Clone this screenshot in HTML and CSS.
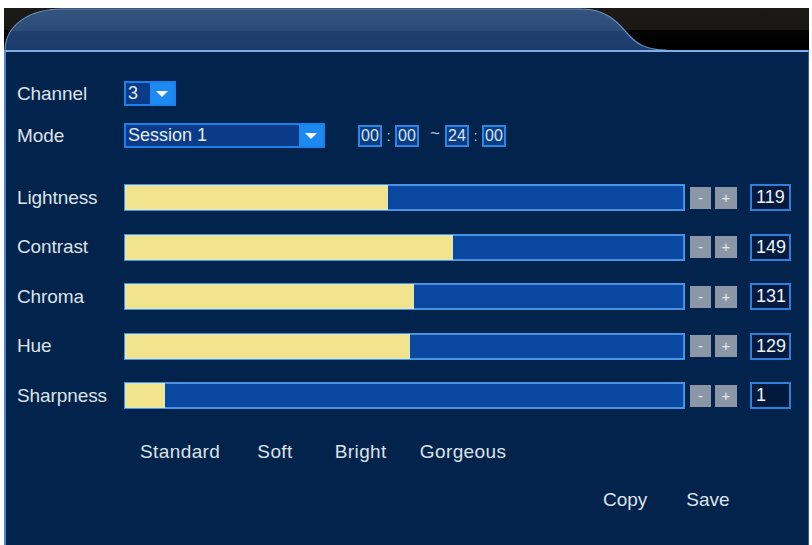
FILE: index.html
```html
<!DOCTYPE html>
<html>
<head>
<meta charset="utf-8">
<link rel="stylesheet" href="styles.css">
</head>
<body>
<div class="frame">
  <div class="header">
    <svg class="tab" width="670" height="42" viewBox="0 0 670 42">
      <defs>
        <linearGradient id="tabg" x1="0" y1="0" x2="0" y2="1">
          <stop offset="0" stop-color="#33547f"/>
          <stop offset="0.52" stop-color="#2c4c78"/>
          <stop offset="0.53" stop-color="#1e3f6f"/>
          <stop offset="1" stop-color="#1b3c6c"/>
        </linearGradient>
      </defs>
      <path d="M1,43 C1,18 24,1 58,1 L578,1 C600,1 612,12 622,24 C632,36 642,42 662,42 L662,43 Z" fill="url(#tabg)" stroke="#6d8dbd" stroke-width="1.2"/>
    </svg>
  </div>
  <div class="panel">
    <div class="row row-channel">
      <span class="label">Channel</span>
      <div class="select select-small">
        <span class="select-value">3</span>
        <span class="select-arrow"><span class="tri"></span></span>
      </div>
    </div>
    <div class="row row-mode">
      <span class="label">Mode</span>
      <div class="select select-wide">
        <span class="select-value">Session 1</span>
        <span class="select-arrow"><span class="tri"></span></span>
      </div>
      <div class="time">
        <span class="tbox">00</span><span class="sep">:</span><span class="tbox">00</span><span class="sep tilde">~</span><span class="tbox">24</span><span class="sep">:</span><span class="tbox">00</span>
      </div>
    </div>

    <div class="sliders">
      <div class="row slider-row">
        <span class="label">Lightness</span>
        <div class="track"><div class="fill" style="width:261px"></div></div>
        <span class="btn btn-minus">-</span><span class="btn btn-plus">+</span>
        <span class="value">119</span>
      </div>
      <div class="row slider-row">
        <span class="label">Contrast</span>
        <div class="track"><div class="fill" style="width:326px"></div></div>
        <span class="btn btn-minus">-</span><span class="btn btn-plus">+</span>
        <span class="value">149</span>
      </div>
      <div class="row slider-row">
        <span class="label">Chroma</span>
        <div class="track"><div class="fill" style="width:287px"></div></div>
        <span class="btn btn-minus">-</span><span class="btn btn-plus">+</span>
        <span class="value">131</span>
      </div>
      <div class="row slider-row">
        <span class="label">Hue</span>
        <div class="track"><div class="fill" style="width:283px"></div></div>
        <span class="btn btn-minus">-</span><span class="btn btn-plus">+</span>
        <span class="value">129</span>
      </div>
      <div class="row slider-row">
        <span class="label">Sharpness</span>
        <div class="track"><div class="fill" style="width:38px"></div></div>
        <span class="btn btn-minus">-</span><span class="btn btn-plus">+</span>
        <span class="value">1</span>
      </div>
    </div>

    <div class="presets">
      <span class="preset p-standard">Standard</span>
      <span class="preset p-soft">Soft</span>
      <span class="preset p-bright">Bright</span>
      <span class="preset p-gorgeous">Gorgeous</span>
    </div>

    <div class="actions">
      <span class="action">Copy</span>
      <span class="action">Save</span>
    </div>
  </div>
</div>
</body>
</html>
```

FILE: styles.css
```css
html, body {
  margin: 0;
  padding: 0;
  background: #ffffff;
}

body {
  font-family: "Liberation Sans", Arial, sans-serif;
  color: #dfe4ec;
  overflow: hidden;
}

.frame {
  margin: 8px 3px 0 4px;
  height: 537px;
  display: flex;
  flex-direction: column;
}

.header {
  height: 42px;
  flex: none;
  background: linear-gradient(#1c1a17 0, #1a1815 52%, #030303 53%, #000000 100%);
  display: flex;
  align-items: flex-end;
}

.tab {
  display: block;
}

.panel {
  flex: 1;
  background: #02234b;
  border-top: 2px solid #7eaee8;
  border-left: 2px solid #4f86cf;
  border-right: 1px solid #2a5fa8;
  padding-top: 29px;
  display: flex;
  flex-direction: column;
}

.row {
  display: flex;
  align-items: center;
}

.label {
  width: 107px;
  padding-left: 11px;
  font-size: 19px;
  flex: none;
  letter-spacing: -0.1px;
  color: #dde2ea;
}

/* selects */
.select {
  display: flex;
  height: 25px;
  box-sizing: border-box;
  border: 2px solid #1a80ec;
  background: #0a3b88;
}

.select-small { width: 52px; }
.select-wide { width: 201px; }

.select-value {
  flex: 1;
  font-size: 18px;
  line-height: 21px;
  padding-left: 2px;
  color: #e6ecf5;
}

.select-arrow {
  width: 24px;
  background: #1d8af2;
  display: flex;
  align-items: center;
  justify-content: center;
}

.tri {
  width: 0;
  height: 0;
  border-left: 6px solid transparent;
  border-right: 6px solid transparent;
  border-top: 6px solid #ffffff;
}

.row-channel { height: 25px; }
.row-mode { height: 25px; margin-top: 17px; }

/* time */
.time {
  display: flex;
  align-items: center;
  margin-left: 33px;
}

.tbox {
  width: 24px;
  height: 22px;
  box-sizing: border-box;
  border: 2px solid #2e86e2;
  background: #0b3c86;
  color: #d6e6fa;
  font-size: 16px;
  line-height: 18px;
  text-align: center;
}

.sep {
  width: 13px;
  text-align: center;
  font-size: 15px;
  color: #b8c8e0;
}

.tilde {
  width: 26px;
  font-size: 17px;
  line-height: 17px;
  padding-bottom: 4px;
  padding-left: 6px;
  box-sizing: border-box;
}

/* sliders */
.sliders {
  margin-top: 36px;
  display: flex;
  flex-direction: column;
  gap: 22.5px;
}

.slider-row { height: 27px; }

.track {
  width: 561px;
  height: 27px;
  box-sizing: border-box;
  border: 2px solid #4a93e2;
  background: #0a47a1;
  flex: none;
}

.fill {
  height: 100%;
  background: #f2e38d;
  box-shadow: 0 0 0 1px #d8e8c0;
}

.btn {
  width: 21px;
  height: 22px;
  background: #8b97a6;
  color: #e4e8ee;
  font-size: 15px;
  line-height: 22px;
  text-align: center;
  flex: none;
}

.btn-minus { margin-left: 5px; }
.btn-plus { margin-left: 4px; width: 22px; }

.value {
  width: 41px;
  height: 27px;
  box-sizing: border-box;
  margin-left: 13px;
  border: 2px solid #2f7fdb;
  background: #021a3e;
  color: #eef2f8;
  font-size: 18px;
  line-height: 23px;
  padding-left: 4px;
  flex: none;
}

/* presets */
.presets {
  display: flex;
  margin-top: 31px;
  padding-left: 134px;
  height: 24px;
  align-items: center;
}

.preset, .action {
  font-size: 19px;
  letter-spacing: 0.4px;
  color: #dde2ea;
}

.p-soft { margin-left: 37px; }
.p-bright { margin-left: 42px; }
.p-gorgeous { margin-left: 33px; }

.actions {
  display: flex;
  gap: 39px;
  margin-top: 24px;
  padding-left: 597px;
  height: 24px;
  align-items: center;
}

.action { letter-spacing: 0; }
```
